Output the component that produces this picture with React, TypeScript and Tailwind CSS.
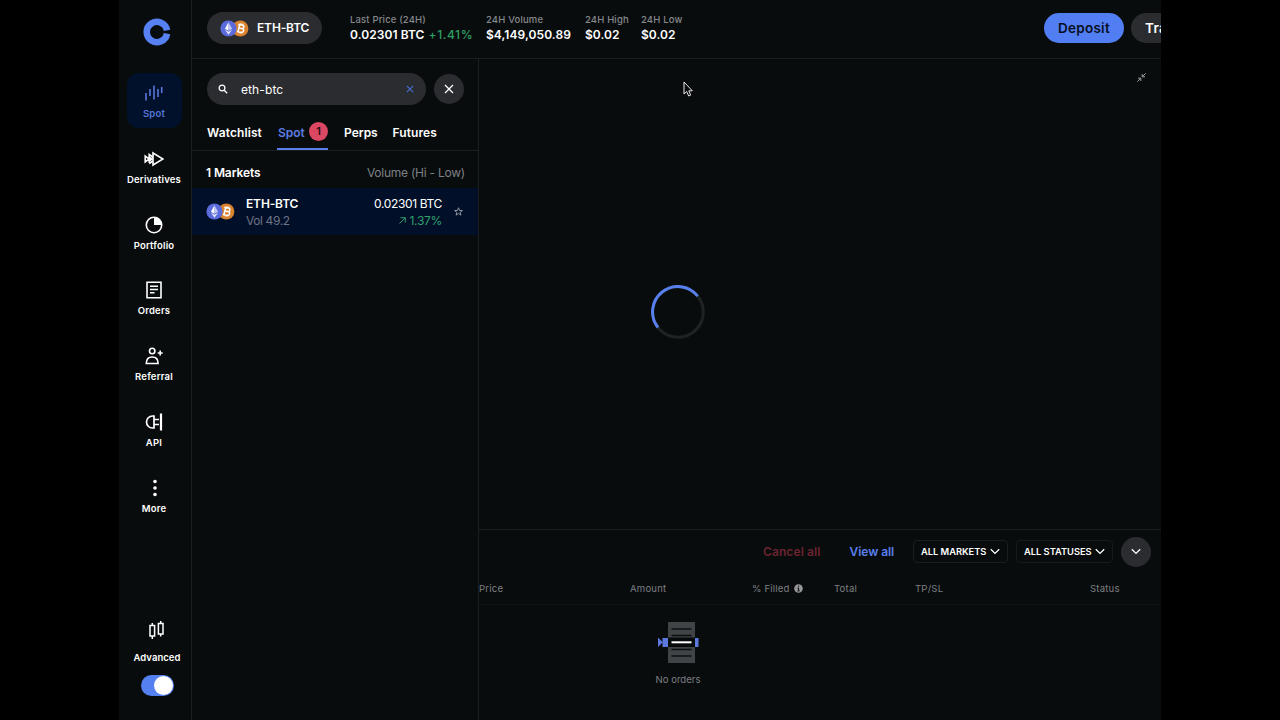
import { ReactNode } from "react";

type NavItem = {
  label: string;
  icon: ReactNode;
  active?: boolean;
};

const navItems: NavItem[] = [
  {
    label: "Spot",
    active: true,
    icon: (
      <svg width="18" height="18" viewBox="0 0 18 18" stroke="currentColor" strokeWidth="1.6">
        <path d="M1 9v7.5M5 5v7M9 1.5v14M13 5v8M16.7 3v6" />
      </svg>
    ),
  },
  {
    label: "Derivatives",
    icon: (
      <svg width="20" height="16" viewBox="0 0 20 16" fill="none" stroke="currentColor" strokeWidth="1.6">
        <path d="M9 2l10 6-10 6z" />
        <path d="M5.2 11.8V3.5L9 6M5.2 12.5L9 10M1.2 11V5l4 3zM5.2 6L8 8l-2.8 2" />
      </svg>
    ),
  },
  {
    label: "Portfolio",
    icon: (
      <svg width="18" height="18" viewBox="0 0 18 18" fill="none" stroke="currentColor" strokeWidth="1.6">
        <circle cx="9" cy="9" r="7.7" />
        <path d="M9 1.3V9h7.7A7.7 7.7 0 0 0 9 1.3z" fill="currentColor" stroke="none" />
      </svg>
    ),
  },
  {
    label: "Orders",
    icon: (
      <svg width="18" height="18" viewBox="0 0 18 18" fill="none" stroke="currentColor" strokeWidth="1.6">
        <path d="M2 1.2h14v15.6H2zM5 5.3h8M5 8.5h8M5 11.8h4.5" />
      </svg>
    ),
  },
  {
    label: "Referral",
    icon: (
      <svg width="18" height="18" viewBox="0 0 18 18" fill="none" stroke="currentColor" strokeWidth="1.6">
        <circle cx="7.2" cy="4" r="2.7" />
        <path d="M1.3 16.5c0-4 2.3-6.5 5.9-6.5s5.9 2.5 5.9 6.5zM15.2 3.5v5M12.7 6h5" />
      </svg>
    ),
  },
  {
    label: "API",
    icon: (
      <svg width="18" height="18" viewBox="0 0 18 18" fill="none" stroke="currentColor" strokeWidth="1.7">
        <path d="M9 3H7.5a6 6 0 0 0 0 12H9zM9 6.5h5M9 11.5h5" />
        <path d="M16 .5v17" strokeWidth="2.2" />
      </svg>
    ),
  },
  {
    label: "More",
    icon: (
      <svg width="18" height="18" viewBox="0 0 18 18" fill="currentColor" className="ml-0.5">
        <circle cx="9" cy="2.5" r="1.8" />
        <circle cx="9" cy="9" r="1.8" />
        <circle cx="9" cy="15.5" r="1.8" />
      </svg>
    ),
  },
];

const stats = [
  { label: "Last Price (24H)", value: "0.02301 BTC", change: "+1.41%", width: "w-[136px]" },
  { label: "24H Volume", value: "$4,149,050.89", width: "w-[99px]" },
  { label: "24H High", value: "$0.02", width: "w-[56px]" },
  { label: "24H Low", value: "$0.02", width: "w-[50px]" },
];

const columns = [
  { label: "Price", width: "w-[151px]" },
  { label: "Amount", width: "w-[122px]" },
  { label: "% Filled", width: "w-[82px]", info: true },
  { label: "Total", width: "w-[81px]" },
  { label: "TP/SL", width: "w-[175px]" },
  { label: "Status", width: "w-[60px]" },
];

function PairIcon() {
  return (
    <svg width="29" height="17" viewBox="0 0 29 17" className="shrink-0">
      <circle cx="20.3" cy="8.5" r="8.1" fill="#d9832f" />
      <g transform="rotate(12 21 8.5)" fill="none" stroke="#fff" strokeWidth="1.5">
        <path d="M18.8 4.8v7.4M17.5 4.8h4.2a1.75 1.75 0 0 1 0 3.6h-2.900h3.300a1.9 1.9 0 0 1 0 3.8h-4.600" />
        <path d="M20 3.2v1.6M22 3.2v1.6M20 12.2v1.6M22 12.2v1.6" strokeWidth="1" />
      </g>
      <circle cx="8.5" cy="8.5" r="8.1" fill="#5c6bdb" />
      <path d="M8.5 2.3L4.9 8.7l3.6 2.1z" fill="#fff" />
      <path d="M8.5 2.3l3.6 6.4-3.6 2.1z" fill="#c3c9f4" />
      <path d="M4.9 9.7l3.6 5 3.6-5-3.6 2.1z" fill="#e4e7fb" />
    </svg>
  );
}

function Chevron() {
  return (
    <svg width="10" height="7" viewBox="0 0 10 7" fill="none" stroke="currentColor" strokeWidth="1.3" className="shrink-0">
      <path d="M.8 1.2L5 5.4l4.2-4.2" />
    </svg>
  );
}

function Cross({ size }: { size: number }) {
  return (
    <svg width={size} height={size} viewBox="0 0 10 10" fill="none" stroke="currentColor" strokeWidth="1.3">
      <path d="M1 1l8 8M9 1L1 9" />
    </svg>
  );
}

function Sidebar() {
  return (
    <aside className="flex w-[73px] shrink-0 flex-col items-center border-r border-[#1b1e20]">
      <svg width="28" height="28" viewBox="0 0 28 28" className="ml-[3px] mt-[18px] shrink-0">
        <path d="M24 12.35A10.2 10.2 0 1 0 24 15.65" fill="none" stroke="#5781f2" strokeWidth="6.6" />
      </svg>

      <nav className="mr-[2px] mt-[27px] flex flex-col gap-[10.8px]">
        {navItems.map((item) => (
          <a
            key={item.label}
            className={[
              "flex h-[55px] w-[55px] flex-col items-center rounded-xl pt-[11px]",
              item.active ? "bg-[#01112c] text-[#5676d8]" : "text-white",
            ].join(" ")}
          >
            <span className="flex h-[18px] items-center">{item.icon}</span>
            <span className="mt-[5px] whitespace-nowrap text-[9.5px] font-semibold leading-[14px] tracking-[0.2px]">
              {item.label}
            </span>
          </a>
        ))}
      </nav>

      <div className="mb-6 ml-[4px] mt-auto flex flex-col items-center text-white">
        <svg width="18" height="20" viewBox="0 0 18 20" fill="none" stroke="currentColor" strokeWidth="1.5">
          <path d="M2 5.5h4.6v10.500H2zM10.4 3.5H15v10.500h-4.600zM4.3 3v2.500M4.3 16v3M12.7 1v2.500M12.7 14v2.500" />
        </svg>
        <span className="mt-[11px] text-[9.5px] font-semibold leading-[14px] tracking-[0.05px]">Advanced</span>
        <span className="mt-[10px] flex h-[21px] w-[33px] justify-end rounded-full bg-[#5580f0] p-px">
          <span className="h-[19px] w-[19px] rounded-full bg-white" />
        </span>
      </div>
    </aside>
  );
}

function Header() {
  return (
    <header className="flex h-[59px] shrink-0 items-start border-b border-[#1b1e20] pl-[15px] pt-3">
      <button className="flex h-8 w-[115px] shrink-0 items-center rounded-full bg-[#2a2c30] pl-[13px] text-[12px] font-semibold text-white">
        <PairIcon />
        <span className="ml-2 tracking-[-0.15px]">ETH-BTC</span>
      </button>

      <div className="ml-[28px] flex">
        {stats.map((stat) => (
          <div key={stat.label} className={[stat.width, "shrink-0 whitespace-nowrap"].join(" ")}>
            <p className="text-[9.5px] font-medium leading-[15px] tracking-[0.15px] text-[#85888c]">{stat.label}</p>
            <p className="text-[12px] font-semibold leading-[15px] tracking-[0.07px] text-white">
              {stat.value}
              {stat.change ? (
                <span className="ml-1 font-medium tracking-[0.6px] text-[#31a067]">{stat.change}</span>
              ) : null}
            </p>
          </div>
        ))}
      </div>

      <button className="ml-auto mt-px h-[30px] w-[80px] shrink-0 rounded-full bg-[#527ef4] text-[13.5px] font-semibold tracking-[0.25px] text-[#080e20]">
        Deposit
      </button>
      <div className="ml-[7px] mt-px w-[30px] shrink-0 overflow-hidden">
        <button className="h-[30px] w-[80px] rounded-full bg-[#2a2c30] pl-[14px] text-left text-[13.5px] font-semibold tracking-[0.25px] text-white">
          Transfer
        </button>
      </div>
    </header>
  );
}

function MarketPanel() {
  return (
    <section className="flex w-[287px] shrink-0 flex-col border-r border-[#1b1e20]">
      <div className="flex items-center gap-2 pl-[15px] pt-[14px]">
        <div className="flex h-8 w-[219px] items-center rounded-full bg-[#2a2c30] pl-[11px] pr-3 text-white">
          <svg width="10" height="10" viewBox="0 0 10 10" fill="none" stroke="currentColor" strokeWidth="1.3">
            <circle cx="4" cy="4" r="2.9" />
            <path d="M6.2 6.2L9.2 9.2" />
          </svg>
          <span className="ml-[13px] pt-px text-[12px] tracking-[0.1px]">eth-btc</span>
          <span className="ml-auto text-[#4a72dc]">
            <Cross size={8} />
          </span>
        </div>
        <button className="flex h-[30px] w-[30px] items-center justify-center rounded-full bg-[#2a2c30] text-white">
          <Cross size={10} />
        </button>
      </div>

      <div className="mt-[9px] flex h-[37px] border-b border-[#1b1e20] pl-[15px] text-[12px] font-semibold leading-[37px] text-white">
        <span className="w-[70px] tracking-[0.1px]">Watchlist</span>
        <span className="flex h-[36px] w-[51px] items-center justify-between border-b-2 border-[#5b80ee] pl-px text-[#5c7ce0]">
          <span className="pt-0.5">Spot</span>
          <span className="flex h-[19px] w-[19px] items-center justify-center rounded-full bg-[#dc4763] text-[11px] text-[#2b0b14]">
            1
          </span>
        </span>
        <span className="ml-4 w-[48.5px]">Perps</span>
        <span className="tracking-[0.1px]">Futures</span>
      </div>

      <div className="flex h-[37px] items-end justify-between pb-[6px] pl-[14px] pr-[13px] text-[12px]">
        <span className="font-semibold tracking-[-0.1px] text-white">1 Markets</span>
        <span className="tracking-[-0.24px] text-[#7d8085]">Volume (Hi - Low)</span>
      </div>

      <div className="flex h-[47px] items-center bg-[#010f29] pl-[14px] text-[12px] leading-[17px]">
        <PairIcon />
        <div className="ml-[11px]">
          <p className="font-semibold tracking-[-0.15px] text-white">ETH-BTC</p>
          <p className="tracking-[-0.4px] text-[#6d7486]">Vol 49.2</p>
        </div>
        <div className="ml-auto text-right">
          <p className="tracking-[-0.35px] text-white">0.02301 BTC</p>
          <p className="flex items-center justify-end gap-[3px] tracking-[-0.3px] text-[#2fa26c]">
            <svg width="7" height="7" viewBox="0 0 7 7" fill="none" stroke="currentColor" strokeWidth="1">
              <path d="M.5 6.5l5.600-5.600M1.5.7h4.800v4.800" />
            </svg>
            1.37%
          </p>
        </div>
        <svg
          width="9"
          height="9"
          viewBox="0 0 24 24"
          fill="none"
          stroke="#9297a3"
          strokeWidth="2.6"
          className="ml-3 mr-[15px]"
        >
          <path d="M12 2l2.700 7.200 7.700.3-6 4.800 2.100 7.400L12 17.400l-6.500 4.300 2.100-7.400-6-4.800 7.700-.3z" />
        </svg>
      </div>
    </section>
  );
}

function ChartPanel() {
  return (
    <section className="flex h-[470px] shrink-0 items-start justify-between pl-[172px] pr-[15px]">
      <svg width="54" height="54" viewBox="0 0 54 54" fill="none" strokeWidth="3" className="mt-[226px]">
        <circle cx="27" cy="27" r="25.3" stroke="#202325" />
        <path d="M7 42.500A25.3 25.3 0 0 1 46.7 11.1" stroke="#5780ee" />
      </svg>
      <svg width="9" height="9" viewBox="0 0 9 9" fill="none" stroke="#aaacaf" strokeWidth=".9" className="mt-[14px]">
        <path d="M8.7.3L5.3 3.7M5.2 1v2.800H8M.3 8.700l3.400-3.400M1 5.200h2.800V8" />
      </svg>
    </section>
  );
}

function OrdersPanel() {
  return (
    <section className="flex flex-1 flex-col border-t border-[#1b1e20]">
      <div className="flex h-[43px] items-center pl-[284px] text-[12px] font-semibold">
        <span className="w-[86.5px] tracking-[0.1px] text-[#6b2430]">Cancel all</span>
        <span className="w-[63.5px] tracking-[-0.05px] text-[#5980ee]">View all</span>
        <button className="flex h-[23px] w-[95px] shrink-0 items-center justify-between rounded-sm border border-[#1b1e20] px-[7px] text-[9.3px] text-white">
          <span className="whitespace-nowrap">ALL MARKETS</span>
          <Chevron />
        </button>
        <button className="ml-2 flex h-[23px] w-[97px] shrink-0 items-center justify-between rounded-sm border border-[#181b1d] px-[7px] text-[9.3px] text-white">
          <span className="whitespace-nowrap">ALL STATUSES</span>
          <Chevron />
        </button>
        <button className="ml-2 flex h-[30px] w-[30px] shrink-0 items-center justify-center rounded-full bg-[#2a2c30] text-white">
          <Chevron />
        </button>
      </div>

      <div className="flex h-[32px] items-center border-b border-[#0f1214] pt-px text-[9.6px] tracking-[0.18px] text-[#7c7f82]">
        {columns.map((column) => (
          <span key={column.label} className={[column.width, "flex shrink-0 items-center whitespace-nowrap"].join(" ")}>
            {column.label}
            {column.info ? (
              <svg width="9" height="9" viewBox="0 0 9 9" className="ml-1">
                <circle cx="4.5" cy="4.5" r="4.3" fill="#95979a" />
                <path d="M4.6 1.7v1.200M3.6 4h1v2.800M3.4 6.900h2.300" stroke="#0a0d0e" strokeWidth="1" />
              </svg>
            ) : null}
          </span>
        ))}
      </div>

      <div className="flex w-[398px] flex-col items-center pt-4">
        <svg width="42" height="42" viewBox="0 0 42 42">
          <path d="M11 1h27v41H11z" fill="#404447" />
          <path d="M11 16.5h27v9.500H11z" fill="#080b0c" />
          <path d="M14.5 8h20M14.5 14.5h20M14.5 28.5h20M14.5 35h20" stroke="#0c0f10" strokeWidth="1.5" />
          <path d="M14.5 21.3h20" stroke="#fff" strokeWidth="2" />
          <path d="M1 16.5l4.700 4.700L1 26zM5.5 17h5.500v9H5.500zM38 17h3.500v9H38z" fill="#5d79df" />
        </svg>
        <p className="mt-[9px] text-[9.6px] leading-[15px] text-[#7c7f82]">No orders</p>
      </div>
    </section>
  );
}

export default function App() {
  return (
    <div className="h-[720px] w-[1280px] overflow-hidden bg-black font-['Inter',sans-serif]">
      <div className="ml-[119px] flex h-full w-[1042px] overflow-hidden bg-[#090c0d]">
        <Sidebar />
        <div className="flex min-w-0 flex-1 flex-col">
          <Header />
          <div className="flex min-h-0 flex-1">
            <MarketPanel />
            <main className="flex min-w-0 flex-1 flex-col">
              <ChartPanel />
              <OrdersPanel />
            </main>
          </div>
        </div>
      </div>

      <svg width="10" height="16" viewBox="0 0 10 16" className="absolute left-[683px] top-[81px]">
        <path
          d="M1 1v12l2.700-2.500L5.700 15l2-.9-1.900-4.300H9.300z"
          fill="#0a0c0d"
          stroke="#e8e8e8"
          strokeWidth="1"
        />
      </svg>
    </div>
  );
}
